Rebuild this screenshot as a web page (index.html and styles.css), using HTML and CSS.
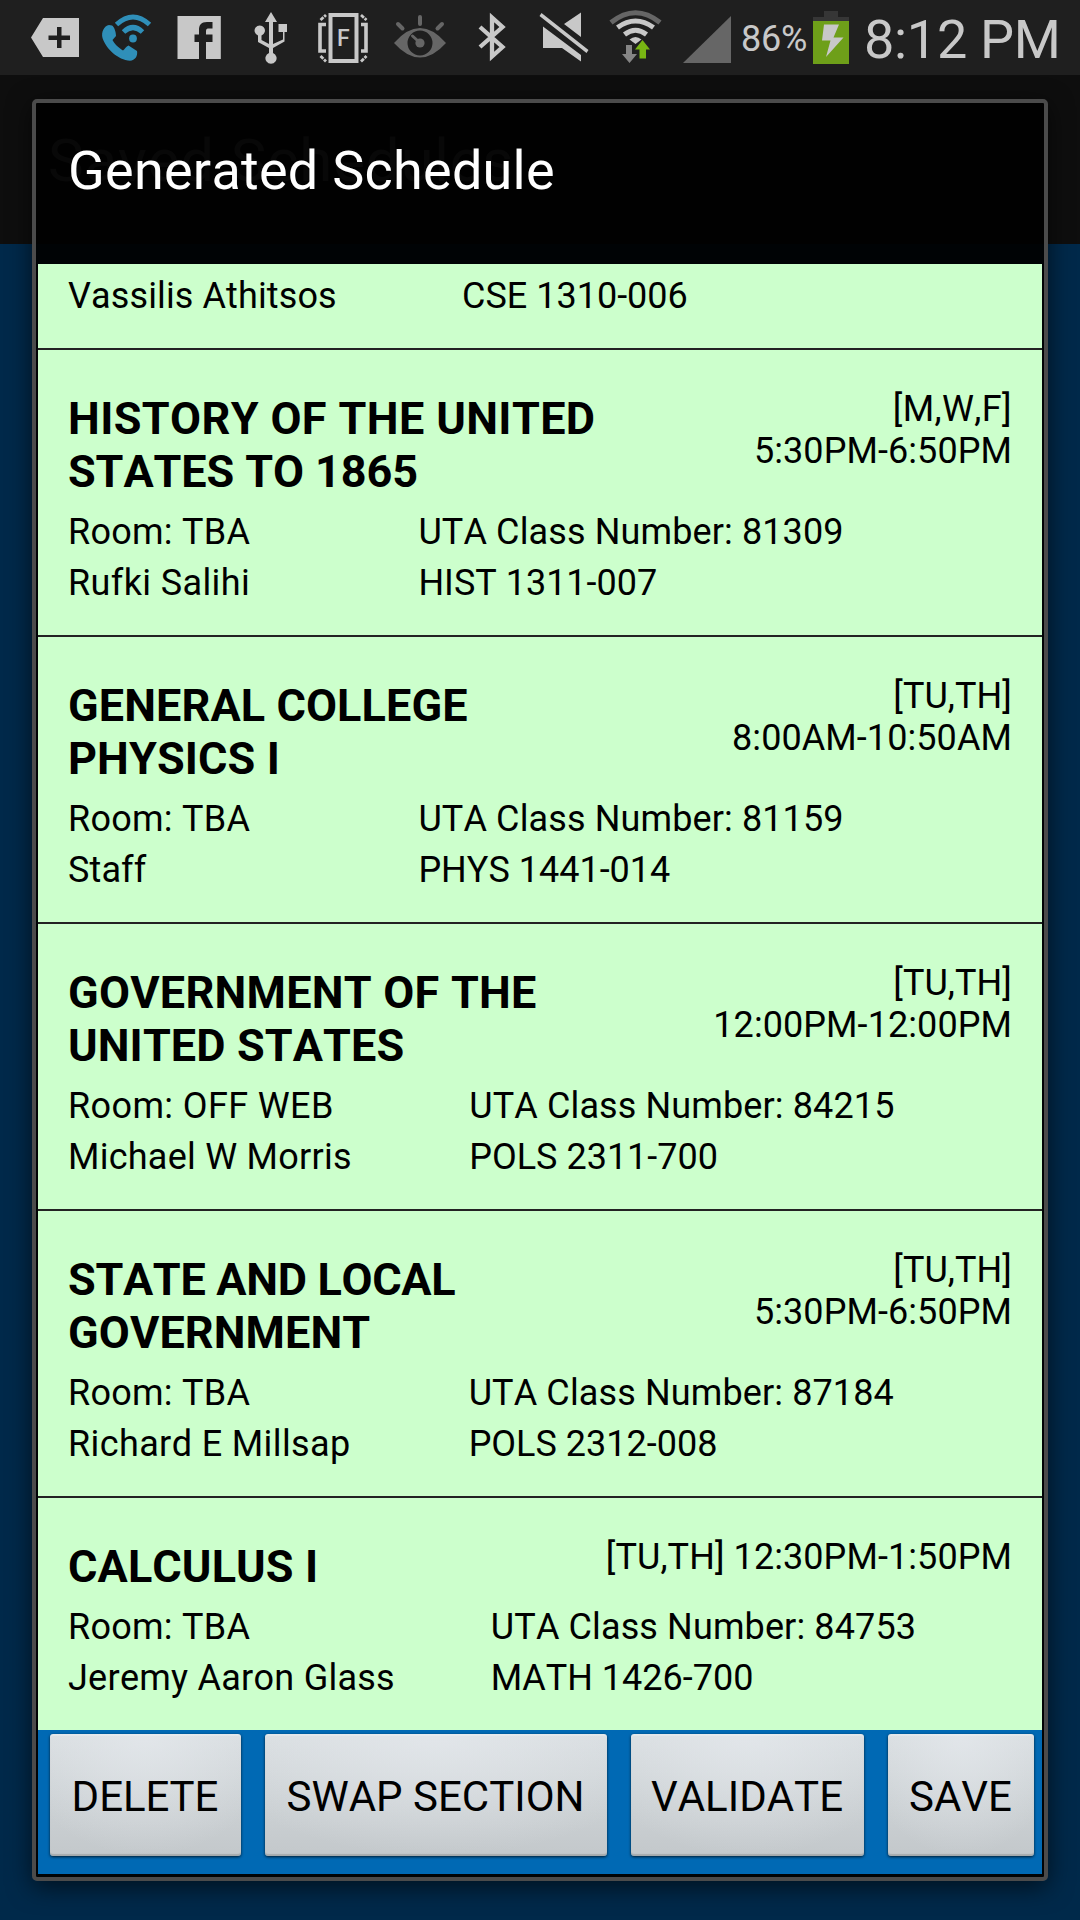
FILE: index.html
```html
<!DOCTYPE html>
<html lang="en">
<head>
<meta charset="utf-8">
<title>Generated Schedule</title>
<link rel="stylesheet" href="styles.css">
</head>
<body>
<div class="screen">
  <header class="status">
    <svg class="icons" width="683" height="75" viewBox="0 0 683 75" aria-hidden="true">
      <g fill="#c8c8c8">
        <path fill-rule="evenodd" d="M31 37.500 43 18H79V57H43ZM57 27V35.500H48.500V40H57V48H61.500V40H70V35.500H61.500V27Z"/>
        <path fill="#2f8fb9" d="M109 25C104 26 101 32 102.500 38C106 49 118 60 130 60.700C135 60.500 138 56 137 51L128.500 45.500C126 46.500 125 49 123 50.500C119 48 114 43.500 112.500 40L116 36C116 31.500 114 26.500 112 25.500Z"/>
        <g fill="none" stroke="#2f8fb9" stroke-width="5"><path d="M116.500 24.500Q133 9.500 149.500 24.500"/><path d="M123.500 32Q133 23 142.500 32"/></g>
        <circle cx="133" cy="38.500" r="3.900" fill="#2f8fb9"/>
        <path d="M177.500 16H220.800V59H206V42H212.500V34.500H206V31C206 29 207 28.500 209 28.500H212.500V22H207C201 22 199 25 199 30V34.500H194.500V42H199V59H177.500Z"/>
        <path d="M271 12 277 22H273V44L283 39.500V32H278.500V24H287V32H284.500V41.500L273 48V53A5.600 5.600 0 1 1 269 53V48L258 42V35.500A5.200 5.200 0 1 1 261.500 35.500V40L269 44V22H265Z"/>
      </g>
      <g fill="none" stroke="#c8c8c8" stroke-width="3.600">
        <rect x="330.500" y="15" width="26" height="46" stroke-width="4"/>
        <path d="M326 24.500H320V51H326M361 24.500H366V51H361"/>
        <path d="M320.500 20 326 15M361 15 366.500 20M320.500 56 326 61.500M361 61.500 366.500 56" stroke-width="2.800" stroke-dasharray="4 1"/>
        <path d="M480 27 502.500 47 492 56.500V17.500L502.500 27 480 47" stroke-width="4.300"/>
      </g>
      <text class="flight" x="337" y="45.500">F</text>
      <path fill="#666" fill-rule="evenodd" d="M394 43Q420 13 446 43Q420 72 394 43ZM420 30.500A12.500 12.500 0 1 0 420 55.500A12.500 12.500 0 1 0 420 30.500Z"/>
      <circle cx="420" cy="43" r="4.600" fill="#666"/>
      <g stroke="#666" stroke-width="4" stroke-linecap="round"><path d="M398 24 402.500 28.500M420 17V24M442 24 437.500 28.500"/><path d="M412.500 36 418 41" stroke-width="3"/></g>
      <g fill="#c8c8c8">
        <path d="M543 26.500 581 55V61.500L562 48H543ZM564 24 581 12.500V37ZM539.500 16 541.500 13 588.500 50 586.500 53Z"/>
        <path d="M635.500 44 629.500 39.500Q635.500 34.500 641.500 39.500Z"/>
      </g>
      <g fill="none" stroke-width="5"><path stroke="#666" d="M611 22.500Q635.500 3 660 22.500"/><path stroke="#c8c8c8" d="M617.500 27.500Q635.500 14.500 653.500 27.500"/><path stroke="#c8c8c8" d="M624.500 34.500Q635.500 26 646.500 34.500"/></g>
      <path fill="#858585" d="M626 45H632V54H637L629.500 63 622 54H626Z"/>
      <path fill="#78b513" d="M639.500 58.500V49.500H635L642.500 40 650 49.500H646V58.500Z"/>
    </svg>
    <svg class="signal" width="48" height="47" viewBox="0 0 48 47" aria-hidden="true"><path fill="#666" d="M0 47 48 0V47Z"/></svg>
    <span class="percent">86%</span>
    <svg class="battery" width="36" height="53" viewBox="0 0 36 53" aria-hidden="true"><path fill="#363636" d="M0 6H11V0H25V6H36V11H0Z"/><path fill="#6e9f19" d="M0 10H36V53H0Z"/><path fill="#c8c8c8" d="M11 13.500H26L20.500 26.500H30.500L13 46 17.500 29.500H9Z"/></svg>
    <span class="clock">8:12 PM</span>
  </header>
  <div class="appbar">Saved Schedules</div>
  <main class="dialog">
    <h1 class="heading">Generated Schedule</h1>
    <section class="list">
      <article class="course partial"><div class="details"><span>Vassilis Athitsos</span><span class="code">CSE 1310-006</span></div></article>
      <article class="course">
        <div class="top"><h2><span class="loose">HISTORY OF THE UNITED</span><br><span class="snug">STATES TO 1865</span></h2><p class="time"><span class="loose">[M,W,F]</span><br>5:30PM-6:50PM</p></div>
        <div class="details"><span class="open">Room: TBA</span><span>UTA Class Number: 81309</span><span class="loose">Rufki Salihi</span><span class="code">HIST 1311-007</span></div>
      </article>
      <article class="course">
        <div class="top"><h2>GENERAL COLLEGE<br>PHYSICS I</h2><p class="time">[TU,TH]<br>8:00AM-10:50AM</p></div>
        <div class="details"><span class="open">Room: TBA</span><span>UTA Class Number: 81159</span><span>Staff</span><span class="code">PHYS 1441-014</span></div>
      </article>
      <article class="course">
        <div class="top"><h2><span class="open">GOVERNMENT OF THE</span><br>UNITED STATES</h2><p class="time">[TU,TH]<br>12:00PM-12:00PM</p></div>
        <div class="details"><span class="loose">Room: OFF WEB</span><span>UTA Class Number: 84215</span><span class="open">Michael W Morris</span><span class="code">POLS 2311-700</span></div>
      </article>
      <article class="course">
        <div class="top"><h2><span class="tight">STATE AND LOCAL</span><br>GOVERNMENT</h2><p class="time">[TU,TH]<br>5:30PM-6:50PM</p></div>
        <div class="details"><span class="open">Room: TBA</span><span>UTA Class Number: 87184</span><span class="loose">Richard E Millsap</span><span class="code">POLS 2312-008</span></div>
      </article>
      <article class="course last">
        <div class="top"><h2>CALCULUS I</h2><p class="time">[TU,TH] 12:30PM-1:50PM</p></div>
        <div class="details"><span class="open">Room: TBA</span><span>UTA Class Number: 84753</span><span class="open">Jeremy Aaron Glass</span><span class="code">MATH 1426-700</span></div>
      </article>
    </section>
    <footer class="actions">
      <button class="btn delete">DELETE</button>
      <button class="btn swap">SWAP SECTION</button>
      <button class="btn validate">VALIDATE</button>
      <button class="btn save">SAVE</button>
    </footer>
  </main>
</div>
</body>
</html>
```
FILE: styles.css
```css
* { box-sizing: border-box; }
body { margin: 0; font-family: Roboto, sans-serif; font-kerning: none; background: #00294a; }
h1, h2, p { margin: 0; }

.screen { position: relative; width: 1080px; height: 1920px; overflow: hidden; background: #00294a; }

.status { display: flex; height: 75px; background: #1f1f1f; color: #c8c8c8; }
.icons { flex: none; }
.flight { font: 500 23px Roboto, sans-serif; fill: #c8c8c8; }
.signal { flex: none; margin-top: 16px; }
.percent { flex: none; width: 72px; padding-left: 10px; font-size: 36px; line-height: 78px; letter-spacing: -0.2px; white-space: nowrap; }
.battery { flex: none; margin: 11px 0 0 10px; }
.clock { padding-left: 15px; font-size: 54px; line-height: 80px; letter-spacing: -0.3px; white-space: nowrap; }

.appbar { height: 169px; padding: 51px 0 0 48px; background: #0e0e0e; color: #707070; font-size: 60px; line-height: 70px; letter-spacing: 0.8px; }

/* The dialog floats over the dimmed page. */
.dialog {
  position: absolute; left: 32px; top: 99px; width: 1016px; height: 1782px;
  display: flex; flex-direction: column;
  padding: 1px 2px 2px; border: 4px solid #4b4b4b; border-radius: 5px;
  background: rgba(0, 0, 0, 0.93); background-clip: padding-box;
  box-shadow: 0 6px 24px rgba(0, 0, 0, 0.6);
}
.heading { height: 160px; padding: 35px 30px; color: #fff; font-size: 54px; font-weight: 400; line-height: 64px; letter-spacing: 0.25px; }

.list { flex: none; height: 1466px; background: #cfc; color: #000; overflow: hidden; }
.course { height: 287px; padding: 42px 30px 0; border-bottom: 2px solid #222; }
.partial { height: 86px; padding-top: 7px; }
.last { height: 232px; border: 0; }
.top { display: flex; justify-content: space-between; }
h2 { font-size: 45px; line-height: 53px; letter-spacing: 0.1px; }
.time { margin-top: -4px; font-size: 36px; line-height: 42px; letter-spacing: 0.08px; text-align: right; }
.details { display: grid; grid-template-columns: auto auto; margin-top: 9px; font-size: 36px; line-height: 51px; letter-spacing: 0.12px; white-space: nowrap; }
.partial .details { grid-template-columns: 394px auto; margin-top: 0; }

.code { letter-spacing: 0; }
.open { letter-spacing: 0.25px; }
.loose { letter-spacing: 0.38px; }
.snug { letter-spacing: -0.1px; }
.tight { letter-spacing: -0.32px; }

.actions { display: flex; gap: 24px; height: 144px; padding: 4px 8px 18px 12px; background: #0069b4; }
.btn {
  padding: 3px 1px 0 0; border: 0; border-radius: 3px; color: #000; font: 42px/48px Roboto, sans-serif; font-kerning: none; white-space: nowrap;
  background: radial-gradient(ellipse 70% 100% at 50% 0, rgba(228, 232, 236, 0.8), rgba(228, 232, 236, 0)), linear-gradient(#d8dde0, #c3c8cb);
  box-shadow: 0 1px 3px rgba(0, 0, 0, 0.75), inset 0 2px 1px rgba(255, 255, 255, 0.25), inset 0 -2px 1px rgba(0, 0, 0, 0.15);
}
.delete { width: 191px; }
.swap { width: 342px; }
.validate { width: 233px; }
.save { width: 146px; }
```
